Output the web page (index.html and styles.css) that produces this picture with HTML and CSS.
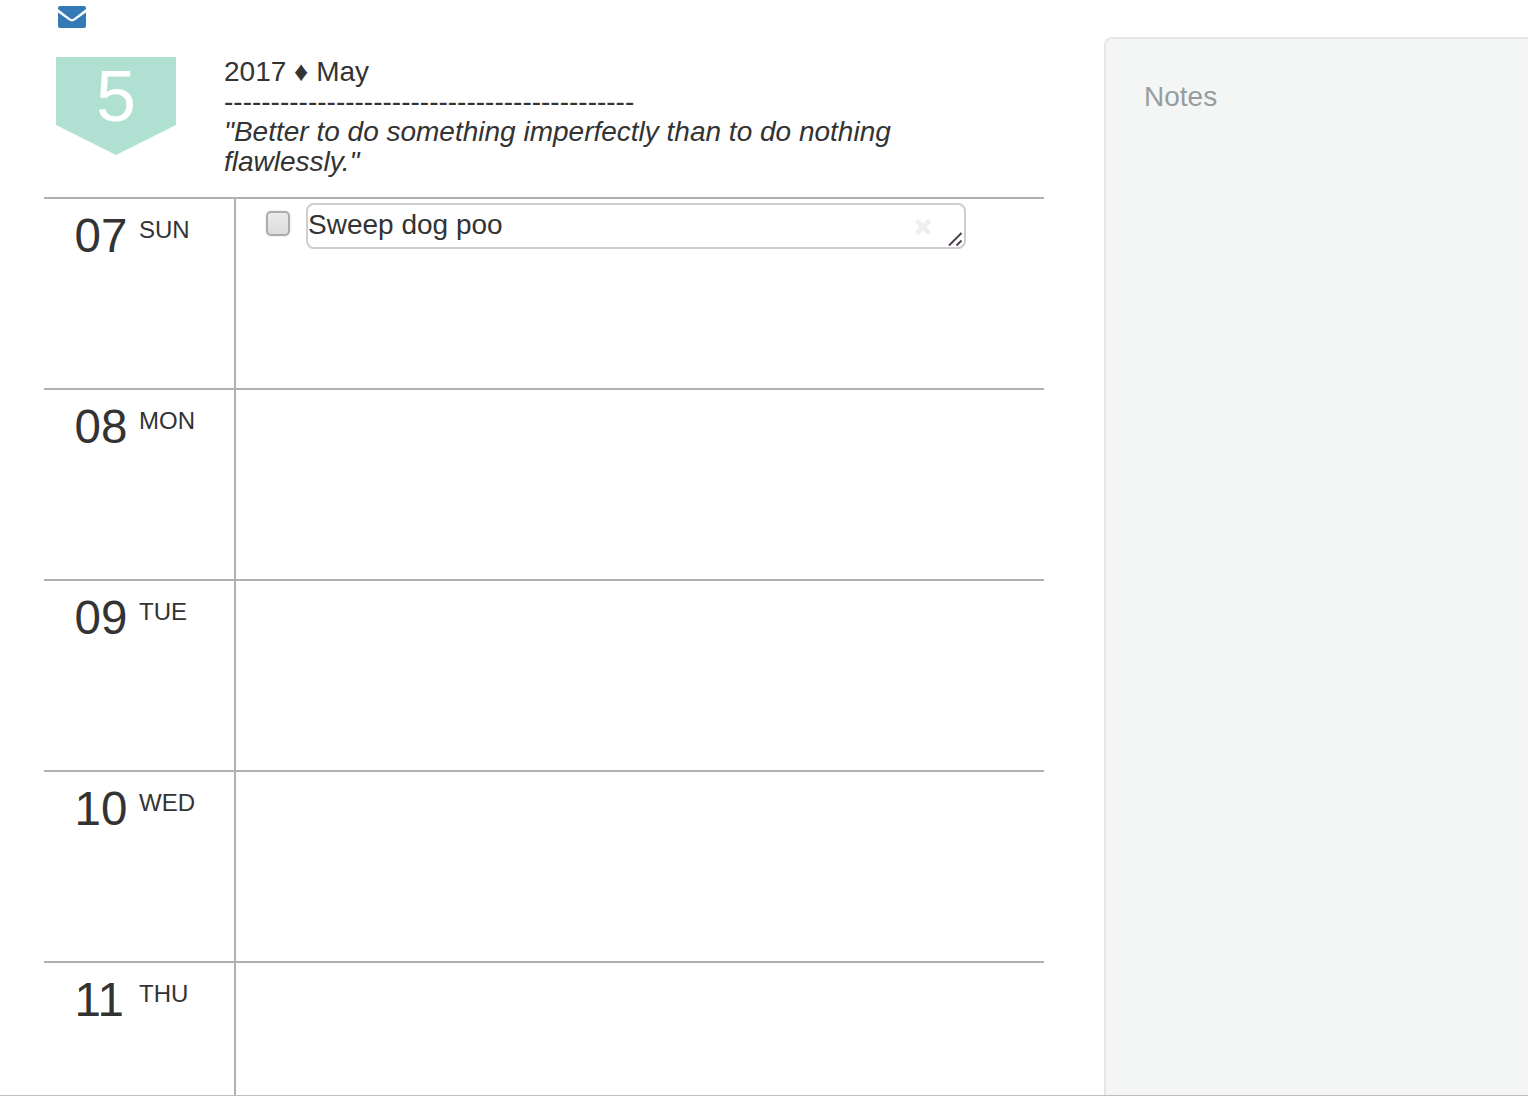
FILE: index.html
```html
<!DOCTYPE html>
<html lang="en">
<head>
<meta charset="utf-8">
<title>Planner</title>
<link rel="stylesheet" href="styles.css">
</head>
<body>
<div class="page">
  <main class="planner">
    <a class="mail" href="#" aria-label="Mail">
      <svg width="28" height="22" viewBox="0 0 28 22"><path fill="#337ab7" d="M2 0h24a2 2 0 0 1 2 2v1L15.500 12.700a3 3 0 0 1-3 0L0 3V2a2 2 0 0 1 2-2z"/><path fill="#337ab7" d="M0 6.500l11 7.800a5 5 0 0 0 6 0l11-7.800V20a2 2 0 0 1-2 2H2a2 2 0 0 1-2-2z"/></svg>
    </a>
    <header class="head">
      <div class="tag">5</div>
      <div class="title">
        <div>2017 ♦ May</div>
        <div>--------------------------------------------</div>
        <div class="quote">"Better to do something imperfectly than to do nothing flawlessly."</div>
      </div>
    </header>
    <section class="row">
      <div class="date"><span class="num">07</span><span class="dow">SUN</span></div>
      <div class="tasks">
        <span class="check"></span>
        <div class="task">
          <span class="task-text">Sweep dog poo</span>
          <svg class="close" width="16" height="16" viewBox="0 0 16 16"><path d="M3 3l10 10M13 3L3 13" stroke="#efefef" stroke-width="5" stroke-linecap="round"/></svg>
          <svg class="grip" width="16" height="16" viewBox="0 0 16 16"><path d="M1 14.500L13.500 2M8.500 14.500l5-5" stroke="#4f3f52" stroke-width="2"/></svg>
        </div>
      </div>
    </section>
    <section class="row">
      <div class="date"><span class="num">08</span><span class="dow">MON</span></div>
      <div class="tasks"></div>
    </section>
    <section class="row">
      <div class="date"><span class="num">09</span><span class="dow">TUE</span></div>
      <div class="tasks"></div>
    </section>
    <section class="row">
      <div class="date"><span class="num">10</span><span class="dow">WED</span></div>
      <div class="tasks"></div>
    </section>
    <section class="row row-last">
      <div class="date"><span class="num">11</span><span class="dow">THU</span></div>
      <div class="tasks"></div>
    </section>
  </main>
  <aside class="notes">Notes</aside>
</div>
</body>
</html>
```
FILE: styles.css
```css
html, body {
  margin: 0;
  height: 100%;
  overflow: hidden;
  background: #fff;
}
.page {
  box-sizing: border-box;
  height: 1096px;
  display: flex;
  align-items: stretch;
  border-bottom: 1px solid #bdbdbd;
  font-family: "Liberation Sans", Arial, sans-serif;
  color: #333;
}
.planner {
  width: 1000px;
  margin-left: 44px;
  flex: none;
  display: flex;
  flex-direction: column;
}
.mail {
  display: block;
  height: 22px;
  margin: 6px 0 0 14px;
}
.mail svg { display: block; }
.head {
  display: flex;
  padding: 29px 0 0 12px;
  box-sizing: border-box;
  height: 169px;
}
.tag {
  width: 120px;
  height: 98px;
  flex: none;
  background: #b0e0d1;
  clip-path: polygon(0 0, 100% 0, 100% 68px, 50% 100%, 0 68px);
  color: #fff;
  font-size: 72px;
  line-height: 78px;
  text-align: center;
}
.title {
  margin-left: 48px;
  width: 700px;
  font-size: 28px;
  line-height: 30px;
}
.quote { font-style: italic; }
.row {
  box-sizing: border-box;
  height: 191px;
  flex: none;
  display: flex;
  border-top: 2px solid #b0b0b0;
}
.row-last {
  flex: 1 1 auto;
  height: auto;
}
.date {
  box-sizing: border-box;
  width: 192px;
  flex: none;
  border-right: 2px solid #b0b0b0;
  padding: 7px 0 0 30.500px;
  display: flex;
  align-items: flex-start;
}
.num {
  width: 64.500px;
  font-size: 47.500px;
  line-height: 60px;
}
.dow {
  font-size: 24px;
  line-height: 48px;
}
.tasks {
  display: flex;
  align-items: flex-start;
  padding: 4px 0 0 30px;
}
.check {
  box-sizing: border-box;
  width: 24px;
  height: 25px;
  margin-top: 8px;
  border: 2px solid #acacac;
  border-radius: 5px;
  background: linear-gradient(#ebebeb, #dcdcdc);
  box-shadow: 0 0 1.500px #c4c4c4;
  flex: none;
}
.task {
  position: relative;
  box-sizing: border-box;
  width: 660px;
  height: 46px;
  margin-left: 16px;
  border: 2px solid #cecece;
  border-radius: 8px;
  font-size: 28px;
  line-height: 40px;
}
.close {
  position: absolute;
  right: 33px;
  top: 14px;
}
.grip {
  position: absolute;
  right: 0;
  bottom: 0;
}
.notes {
  box-sizing: border-box;
  width: 424px;
  margin: 37px 0 0 60px;
  flex: none;
  padding: 42px 0 0 38px;
  background: #f4f6f6;
  border: 2px solid #e6e6e6;
  border-right: 0;
  border-bottom: 0;
  border-top-left-radius: 8px;
  color: #979c9e;
  font-size: 28px;
  line-height: 32px;
}
```
